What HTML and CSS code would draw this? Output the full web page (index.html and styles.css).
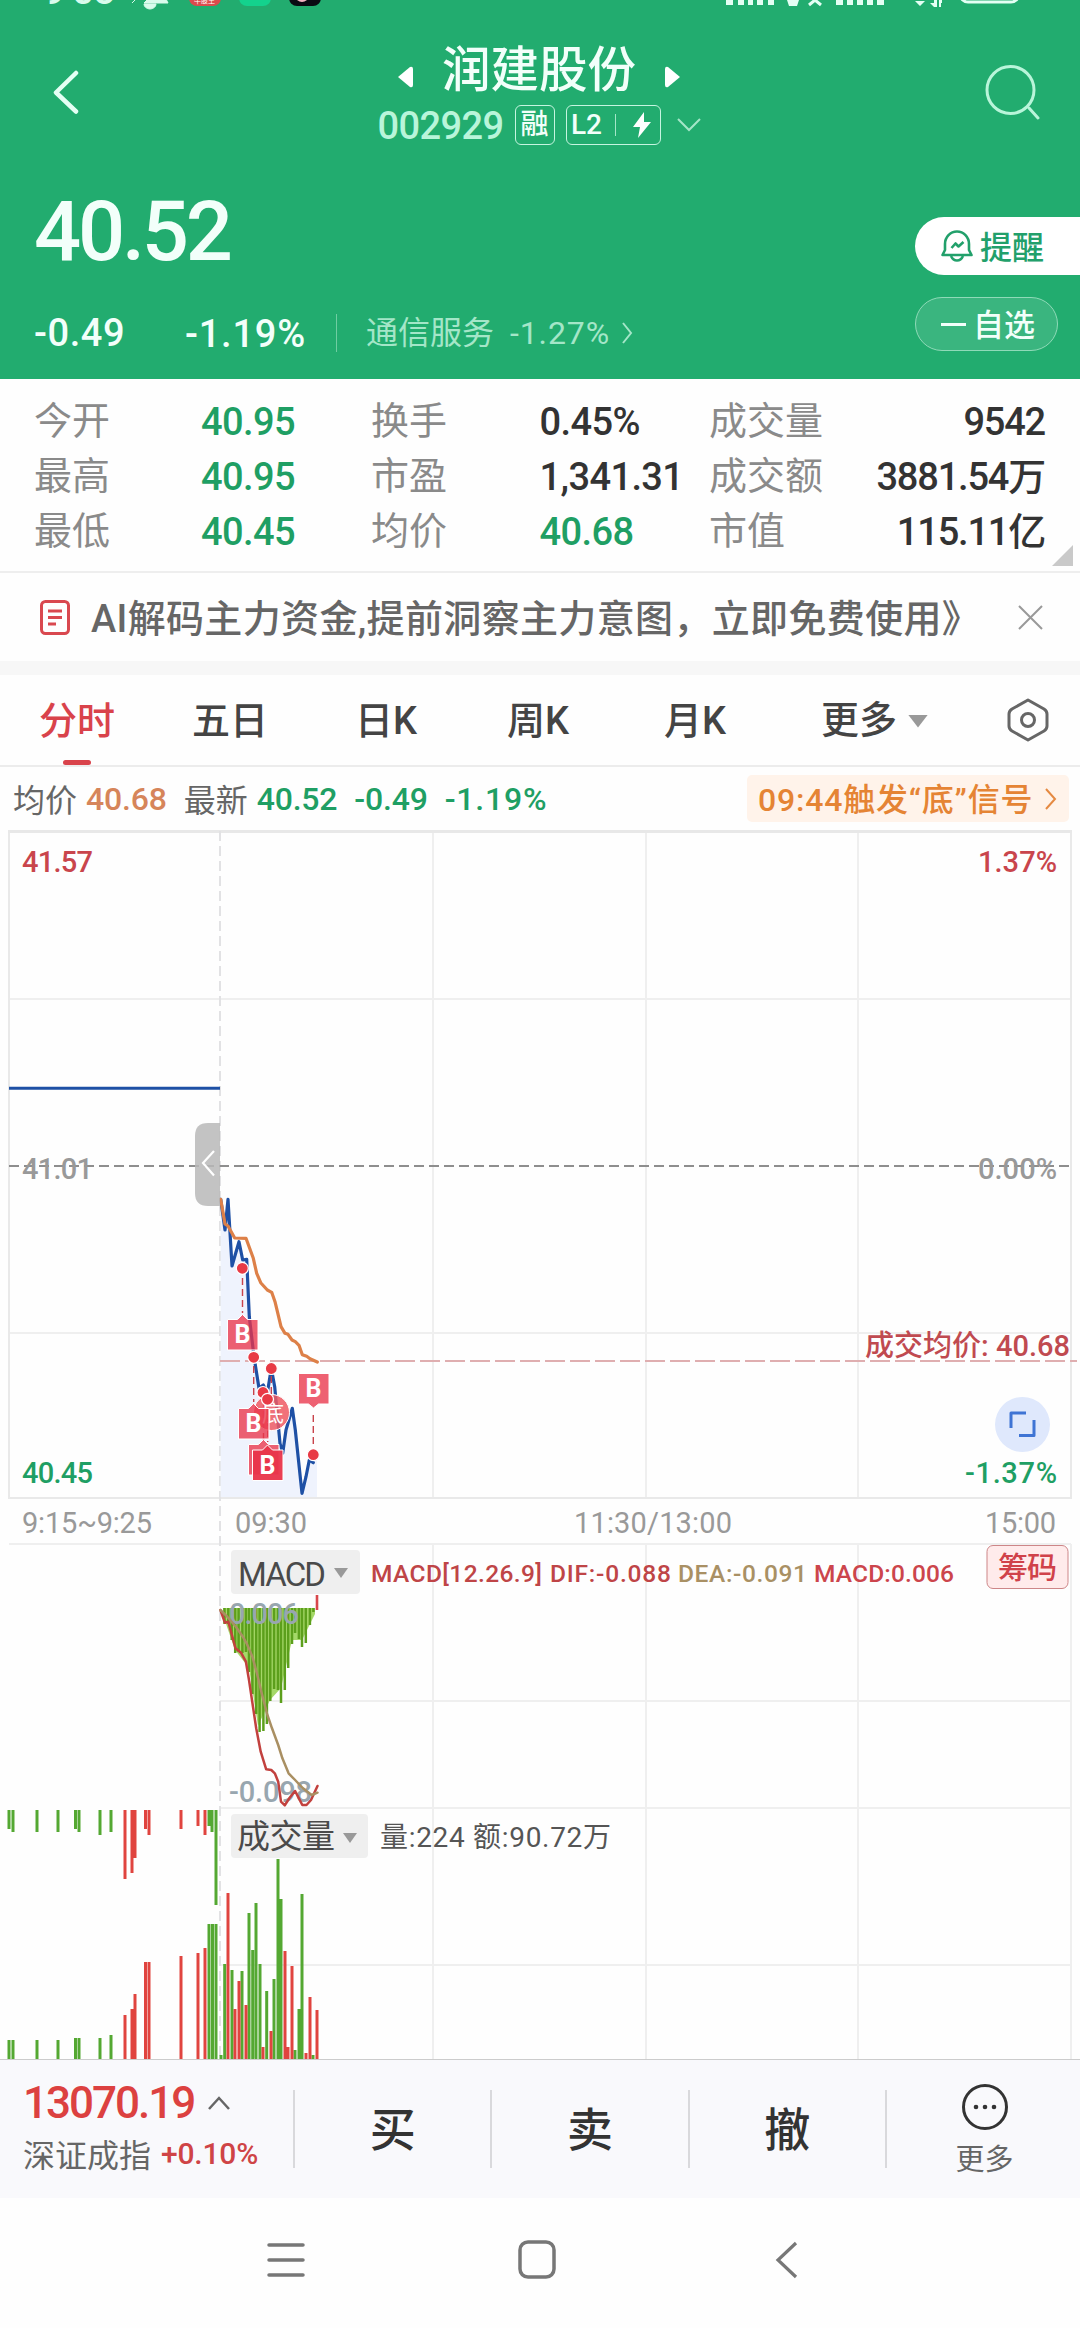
FILE: index.html
```html
<!DOCTYPE html>
<html lang="zh-CN">
<head>
  <meta charset="UTF-8" />
  <meta name="viewport" content="width=device-width, initial-scale=1.0" />
  <title>润建股份 002929</title>
  <link rel="stylesheet" href="styles.css">
</head>
<body>
  <header class="header">
    <svg class="status-bar" width="1080" height="12" viewBox="0 0 1080 12">
      <text class="clock" x="44" y="4">9<tspan dy="-9">:</tspan><tspan x="72" dy="9">58</tspan></text>
      <path d="M132 3l4-4M144 3l4-4h18l2 4zM144 4a6 5 0 0 0 12 0z" fill="#d9fbec" stroke="#d9fbec" stroke-width="1" />
      <rect x="189" y="-26" width="32" height="32" rx="8" fill="#dc4a4c" />
      <text class="app-label" x="194" y="3">牛股王</text>
      <rect x="239" y="-26" width="32" height="32" rx="8" fill="#14d28d" />
      <rect x="289" y="-26" width="32" height="32" rx="8" fill="#0a0a12" />
      <path d="M297 0q5 4 10 0z" fill="#f4b3c2" />
      <path d="M726 0h7v5h-7zM738 0h6v5h-6zM748 0h5v5h-5zM757 0h6v5h-6zM768 0h6v5h-6zM787 0h12l-2 6h-8zM836 0h7v5h-7zM847 0h6v5h-6zM857 0h6v5h-6zM867 0h6v5h-6zM877 0h7v5h-7zM915 1h10l-5 5zM930 3h4V0h3v7h-3zM939 0h3v3h-1v4h-2z" fill="#e4fff4" />
      <path d="M809 5l6-5 6 5" fill="none" stroke="#e4fff4" stroke-width="3" />
      <rect x="960" y="-24" width="59" height="26" rx="8" fill="none" stroke="#e4fff4" stroke-width="3" />
    </svg>
    <div class="title-row">
      <svg class="back" width="30" height="44" viewBox="0 0 30 44"><path d="M25 3L5 22.500l20 19" fill="none" stroke="#e4fff4" stroke-width="4.500" stroke-linecap="round" stroke-linejoin="round" /></svg>
      <div class="title">
        <div class="name">
          <svg width="16" height="22" viewBox="0 0 16 22"><path d="M1 11L13 1q3-1 3 2v16q0 3-3 2z" fill="#fff" /></svg>
          <h1>润建股份</h1>
          <svg width="16" height="22" viewBox="0 0 16 22"><path d="M15 11L3 1Q0 0 0 3v16q0 3 3 2z" fill="#fff" /></svg>
        </div>
        <div class="code">
          <span class="code-number">002929</span>
          <span class="tag">融</span>
          <span class="tag tag-l2">L2<i></i><svg width="18" height="26" viewBox="0 0 18 26"><path d="M11 0L0 15h7L5 26 18 10h-7z" fill="#fff" /></svg></span>
          <svg class="chevron-down" width="24" height="14" viewBox="0 0 24 14"><path d="M1 1l11 11L23 1" fill="none" stroke="#a4e6c8" stroke-width="2" /></svg>
        </div>
      </div>
      <svg class="search" width="56" height="58" viewBox="0 0 56 58"><circle cx="26.500" cy="26" r="23.500" fill="none" stroke="#b9f5da" stroke-width="3" /><path d="M45 44l9 10" stroke="#b9f5da" stroke-width="3" stroke-linecap="round" /></svg>
    </div>
    <div class="quote">
      <div class="quote-left">
        <div class="price">40.52</div>
        <div class="change">
          <span class="change-value">-0.49</span>
          <span class="change-percent">-1.19%</span>
          <span class="sector">通信服务 <b>-1.27%</b></span>
          <svg width="12" height="22" viewBox="0 0 12 22"><path d="M2 1l8 10-8 10" fill="none" stroke="#a4e6c8" stroke-width="2" /></svg>
        </div>
      </div>
      <div class="quote-buttons">
        <div class="alert-button">
          <svg width="32" height="32" viewBox="0 0 32 32" fill="none" stroke="#22a06b" stroke-width="2.600" stroke-linejoin="round"><path d="M4 20V14a12 12.500 0 0 1 24 0v6l2.500 5h-29z" /><path d="M10 26q2 4.500 6 4.500t6-4.500" /><path d="M10.500 18l4-4.500 3 3 5-4.500" /></svg>
          <span>提醒</span>
        </div>
        <div class="watch-button"><i></i><span>自选</span></div>
      </div>
    </div>
  </header>

  <section class="stats">
    <span>今开</span><b class="green">40.95</b><span>换手</span><b>0.45%</b><span>成交量</span><b class="right">9542</b>
    <span>最高</span><b class="green">40.95</b><span>市盈</span><b>1,341.31</b><span>成交额</span><b class="right">3881.54万</b>
    <span>最低</span><b class="green">40.45</b><span>均价</span><b class="green">40.68</b><span>市值</span><b class="right">115.11亿</b>
    <div class="corner"></div>
  </section>

  <section class="notice">
    <svg width="30" height="35" viewBox="0 0 30 35" fill="none" stroke="#d9484f" stroke-width="3"><rect x="1.500" y="1.500" width="27" height="32" rx="4" /><path d="M8 11h14M8 17.500h14M8 24h8" /></svg>
    <p>AI解码主力资金,提前洞察主力意图，立即免费使用》</p>
    <svg width="25" height="25" viewBox="0 0 25 25"><path d="M1 1l23 23M24 1L1 24" stroke="#999" stroke-width="2" /></svg>
  </section>

  <nav class="tabs">
    <span class="active">分时</span>
    <span>五日</span>
    <span>日K</span>
    <span>周K</span>
    <span>月K</span>
    <span class="more">更多<i></i></span>
    <svg width="42" height="44" viewBox="0 0 42 44" fill="none" stroke="#666" stroke-width="3"><path d="M21 2l16 9q3 2 3 5v12q0 3-3 5l-16 9-16-9q-3-2-3-5V16q0-3 3-5z" stroke-linejoin="round" /><circle cx="21" cy="22" r="6.500" /></svg>
  </nav>

  <section class="info">
    <span>均价</span><b class="orange">40.68</b>
    <span class="latest">最新</span><b class="green">40.52</b><b class="green gap">-0.49</b><b class="green gap percent">-1.19%</b>
    <div class="signal"><span>09:44触发“底”信号</span><svg width="12" height="22" viewBox="0 0 12 22"><path d="M1 1l9 10-9 10" fill="none" stroke="#e58a42" stroke-width="2" /></svg></div>
  </section>

  <svg class="chart" width="1080" height="1229" viewBox="0 830 1080 1229">
    <!-- grid -->
    <g fill="none" stroke="#efefef" stroke-width="2">
      <path d="M9 999H1071M9 1333H1071M9 1544H1071M220 1701H1071M220 1808H1071M220 1965H1071" />
      <path d="M433 831V1498M646 831V1498M858 831V1498M433 1544V2059M646 1544V2059M858 1544V2059M1071 1544V2059" />
      <path d="M9 831V1498H1071V831" stroke="#e9e9e9" />
      <path d="M8 831.500H1072" stroke="#e8e8e8" stroke-width="3" />
      <path d="M220 831V2059" stroke="#e2e2e4" stroke-dasharray="10 5" />
    </g>

    <!-- price -->
    <path d="M220.700 1199L225 1230 228 1226 232 1266 239 1241.700 242.700 1260 246.700 1259.300 249.300 1316.700 254 1356.700 259 1388.300 263.300 1385 267.300 1393.300 271.300 1368.300 274.700 1386.700 280 1443.300 282.700 1453.300 286 1430 292.300 1408.300 295.300 1430 302 1493.300 306 1476.700 309.300 1460 317 1460V1497H220.700z" fill="#eff3fd" />
    <path d="M9 1088.300H220" stroke="#1e50a5" stroke-width="3" />
    <path d="M9 1166H1071" stroke="#8e8e8e" stroke-width="2" stroke-dasharray="10 5" />
    <path d="M220 1361H1077" stroke="#dfaeb0" stroke-width="2" stroke-dasharray="20 5" />
    <path d="M220.700 1199.300L225 1230 228 1199.300 232 1266 239 1241.700 242.700 1260 246.700 1259.300 249.300 1316.700 254 1356.700 259 1388.300 263.300 1385 267.300 1393.300 271.300 1368.300 274.700 1386.700 280 1443.300 282.700 1453.300 286 1430 292.300 1408.300 295.300 1430 302 1493.300 306 1476.700 309.300 1460 313.300 1462.700" class="line" stroke="#1e50a5" />
    <path d="M220.700 1199.300L225 1224 228 1226 234.700 1238 246 1238.300 253.300 1258.300 256.700 1273.300 260.700 1282.700 267.300 1290 271.700 1292.300 275 1301.700 281 1326.700 285 1333.300 288 1334.300 292 1340 295.300 1341.700 299 1345.300 302.300 1354.700 306.700 1356.300 310 1358.700 317.300 1362" class="line" stroke="#dd8048" />

    <path d="M220 1123h-12q-13 0-13 13v57q0 13 13 13h12z" fill="#b9b9b9" fill-opacity=".85" />
    <path d="M214 1151l-11 12 11 12.500" fill="none" stroke="#fff" stroke-width="2.200" />

    <!-- trade markers -->
    <path d="M242.500 1278V1313M253.700 1366V1402M271.300 1376V1396M263.500 1400V1440M267.700 1408V1442M313.300 1415V1448" stroke="#c8434b" stroke-width="1.400" stroke-dasharray="7 4" />
    <circle cx="271.500" cy="1412.500" r="18" fill="#ee5963" fill-opacity=".85" stroke="#fff" />
    <text x="262" y="1421" font-size="22" fill="#fff">底</text>
    <g fill="#e9344a" fill-opacity=".78" stroke="#fff" stroke-width="1">
      <path d="M227.500 1319.500h10l5-5 5 5h10.500v30.500h-30.500z" />
      <path d="M238.500 1408.500h10l5-5 5 5h10.500v30.500h-30.500z" />
      <path d="M248.500 1444.500h10l5-5 5 5h10.500v30.500h-30.500z" />
      <path d="M252.500 1450h10l5-5 5 5h10.500v30.500h-30.500z" fill-opacity=".95" />
      <path d="M298.500 1373.500h30.500v30.500h-10.500l-5 4-5-4h-10z" />
    </g>
    <g class="marker-text">
      <text x="242.500" y="1343">B</text>
      <text x="253.500" y="1432">B</text>
      <text x="267.500" y="1474">B</text>
      <text x="313.500" y="1397">B</text>
    </g>
    <g fill="#e83a45" stroke="#fff" stroke-width="1.200">
      <circle cx="242.300" cy="1268.300" r="6" />
      <circle cx="253.700" cy="1357.300" r="6" />
      <circle cx="271.300" cy="1368.500" r="6" />
      <circle cx="263" cy="1392.500" r="6" />
      <circle cx="267.500" cy="1399.300" r="6" />
      <circle cx="313.300" cy="1454.700" r="6" />
    </g>

    <g class="label">
      <text x="22" y="872" textLength="71" fill="#c9454c">41.57</text>
      <text x="978" y="872" textLength="79" fill="#c9454c">1.37%</text>
      <text x="22" y="1179" textLength="71" fill="#999">41.01</text>
      <text x="978" y="1179" textLength="79" fill="#999">0.00%</text>
      <text x="22" y="1483" textLength="71" fill="#1f9f64">40.45</text>
      <text x="965" y="1483" textLength="92" fill="#1f9f64">-1.37%</text>
      <text x="865" y="1356" textLength="205" fill="#c04a50">成交均价: 40.68</text>
    </g>
    <g class="label time">
      <text x="22" y="1533" textLength="130">9:15~9:25</text>
      <text x="235" y="1533" textLength="72">09:30</text>
      <text x="574" y="1533" textLength="158">11:30/13:00</text>
      <text x="985" y="1533" textLength="71">15:00</text>
    </g>
    <circle cx="1022.500" cy="1424.500" r="27.500" fill="#dfe8fc" />
    <path d="M1011 1428V1413H1026M1019 1435.500H1034V1420" fill="none" stroke="#3f74d4" stroke-width="3" stroke-linejoin="round" />

    <!-- MACD -->
    <path class="macd-back" d="M223 1608H315V1614L302 1640 292 1640 281 1688 270 1700 258 1726 249 1668 235 1650 224 1618z" />
    <path class="macd-bars" d="M224.500 1608v16M228.300 1608v16M231.700 1608v32M235.200 1608v45M238.600 1608v44M242.400 1608v45M245.900 1608v44M249 1608v64M252.400 1608v86M256.200 1608v106M259.600 1608v124M263.400 1608v123M266.900 1608v116M270.300 1608v93M274.100 1608v81M277.900 1608v82M281 1608v95M284.800 1608v82M288.200 1608v60M292 1608v36M295.100 1608v25M298.900 1608v31M302 1608v39M305.800 1608v35M309.900 1608v17M313.400 1608v4" />
    <path d="M317 1595V1610" stroke="#d8474b" stroke-width="2.600" />
    <g class="label" fill="#98a6af">
      <text x="229" y="1624" textLength="70">0.006</text>
      <text x="229" y="1802" textLength="83">-0.098</text>
    </g>
    <path d="M220.400 1610L224.900 1622.700 228.300 1621.700 235.500 1648.300 241 1652.700 245.900 1661.700 249 1680 256.200 1728.300 260.700 1751.700 266.200 1769.300 271.300 1770 274.800 1773.300 278.200 1781.700 281 1801.700 284.800 1805.300 289.300 1798.300 295.100 1791 298.900 1798.300 302.300 1805 306.500 1805 311 1800 317.500 1786" class="line thin" stroke="#c2413e" />
    <path d="M220.400 1610L227.300 1616.700 235.900 1626.700 242.800 1636.700 246.600 1643.300 252.400 1656.700 256.900 1673.300 261.700 1693.300 266.900 1713.300 272 1728.300 278.200 1745 282.400 1758.300 288.600 1773.300 295.100 1780 303 1788.300 311.600 1795 317.500 1792.700" class="line thin" stroke="#a98f62" />
    <rect x="231" y="1550" width="129" height="44" rx="4" fill="#efefef" />
    <text x="238" y="1586" font-size="33" textLength="88" fill="#4a4a4a">MACD</text>
    <path d="M334 1568h14l-7 10z" fill="#999" />
    <g class="legend">
      <text x="371" y="1582" textLength="171" fill="#bf4547">MACD[12.26.9]</text>
      <text x="550" y="1582" textLength="121" fill="#bf4547">DIF:-0.088</text>
      <text x="678" y="1582" textLength="129" fill="#a99064">DEA:-0.091</text>
      <text x="814" y="1582" textLength="140" fill="#cc454c">MACD:0.006</text>
    </g>
    <rect x="987" y="1545.500" width="81" height="43" rx="6" fill="#ffebeb" stroke="#cd8688" />
    <text x="998" y="1578" font-size="30" font-weight="500" textLength="59" fill="#d0424a">筹码</text>

    <!-- call auction and volume -->
    <g class="volume" stroke="#54a832">
      <path d="M9 1810V1829M13 1810V1832M37 1810V1832M58 1810V1832M75.500 1810V1829M79 1810V1832M100 1810V1835M111 1810V1832M209 1810V1826M212 1810V1832M216 1810V1905" />
      <path d="M9 2040V2059M13 2040V2059M37 2040V2059M58 2040V2059M75.500 2038V2059M79 2038V2059M100 2038V2059M111 2035V2059M209 1924V2059M212.500 1924V2059M216 1924V2059" />
      <path d="M221 2055V2059M224.700 1964V2059M232 1970V2059M242 1971V2059M249 1913V2059M252.700 1950V2059M256 1903V2059M260 1964V2059M266.700 1991V2059M274 1979V2059M278 1859V2059M281 1899V2059M295 2050V2059M299 2009V2059M302 1894V2059M313 2055V2059" />
    </g>
    <g class="volume" stroke="#e0443f">
      <path d="M125 1810V1879M132 1810V1873M135 1810V1858M145.500 1810V1829M149 1810V1835M181 1810V1829M198 1810V1826M205 1810V1835" />
      <path d="M125 2015V2059M132 2009V2059M135 1994V2059M145.500 1962V2059M149 1962V2059M181 1956V2059M198 1953V2059M205 1948V2059" />
      <path d="M228 1893V2059M235 2009V2059M239 1981V2059M246 2005V2059M263 2047V2059M271 2031V2059M285 1951V2059M288 2047V2059M292 1966V2059M306 2053V2059M310 1997V2059M317 2010V2059" />
    </g>
    <rect x="231" y="1814" width="137" height="44" rx="4" fill="#efefef" />
    <text x="237" y="1848" font-size="33" textLength="98" fill="#4a4a4a">成交量</text>
    <path d="M343 1833h14l-7 10z" fill="#999" />
    <text x="380" y="1847" font-size="28" textLength="231" fill="#555">量:224 额:90.72万</text>
  </svg>

  <footer class="trade-bar">
    <div class="index">
      <div class="index-value">13070.19<svg width="22" height="14" viewBox="0 0 22 14"><path d="M1 13L11 2l10 11" fill="none" stroke="#666" stroke-width="2.500" /></svg></div>
      <div class="index-name">深证成指<b>+0.10%</b></div>
    </div>
    <div class="action">买</div>
    <div class="action">卖</div>
    <div class="action">撤</div>
    <div class="action more-action">
      <svg width="46" height="46" viewBox="0 0 46 46"><circle cx="23" cy="23" r="21.500" fill="none" stroke="#333" stroke-width="3" /><g fill="#333"><circle cx="14" cy="23" r="2.300" /><circle cx="23" cy="23" r="2.300" /><circle cx="32" cy="23" r="2.300" /></g></svg>
      <span>更多</span>
    </div>
  </footer>

  <div class="system-nav">
    <svg width="38" height="40" viewBox="0 0 38 40"><path d="M2 5h34M2 20h34M2 35h34" stroke="#777" stroke-width="3.500" stroke-linecap="round" /></svg>
    <svg width="38" height="40" viewBox="0 0 38 40"><rect x="2" y="2" width="34" height="35" rx="8" fill="none" stroke="#777" stroke-width="3.500" /></svg>
    <svg width="38" height="40" viewBox="0 0 38 40"><path d="M28 3L10 20l18 17" fill="none" stroke="#777" stroke-width="3.200" /></svg>
  </div>
</body>
</html>
```
FILE: styles.css
```css
* {
  box-sizing: border-box;
}
body {
  margin: 0;
  width: 1080px;
  background: #fefefe;
  color: #333;
  font-family: Roboto, "Noto Sans CJK SC", sans-serif;
}
svg {
  display: block;
  flex: none;
}
h1, p {
  margin: 0;
}
b {
  font-weight: 500;
}
i {
  display: block;
}
.green {
  color: #1f9f64;
}
.orange {
  color: #d6855a;
}

/* header */
.header {
  height: 379px;
  background: #22ac6f;
  color: #f2fffa;
}
.clock {
  font-size: 38px;
  font-weight: 500;
  fill: #d9fbec;
}
.app-label {
  font-size: 7px;
  fill: #fff;
}
.title-row {
  display: flex;
  justify-content: space-between;
  height: 138px;
  padding: 0 40px 0 51px;
}
.back {
  margin-top: 58px;
}
.search {
  margin-top: 52px;
}
.title {
  padding-top: 31px;
  margin-left: 13px;
}
.name {
  display: flex;
  align-items: center;
  justify-content: center;
  gap: 29px;
  height: 56px;
}
.name svg {
  margin-top: 12px;
}
.name h1 {
  font-size: 48.5px;
  font-weight: 500;
  line-height: 56px;
}
.code {
  display: flex;
  align-items: center;
  height: 40px;
  margin-top: 6px;
}
.code-number {
  width: 137px;
  padding-top: 2px;
  font-size: 38px;
  font-weight: 500;
  letter-spacing: -0.6px;
  color: #b9f5da;
}
.tag {
  display: flex;
  align-items: center;
  justify-content: center;
  width: 40px;
  height: 40px;
  border: 1.5px solid #c5f5e0;
  border-radius: 6px;
  font-size: 28px;
  font-weight: 500;
  line-height: 36px;
}
.tag-l2 {
  width: 95px;
  margin-left: 11px;
  padding-right: 4px;
}
.tag-l2 i {
  width: 1px;
  height: 22px;
  margin: 0 17px 0 13px;
  background: #a4e6c8;
}
.chevron-down {
  margin-left: 16px;
}
.quote {
  display: flex;
  justify-content: space-between;
  padding-left: 34px;
}
.price {
  height: 96px;
  margin-top: 34px;
  font-size: 83px;
  font-weight: 500;
  line-height: 96px;
  letter-spacing: -3.2px;
}
.change {
  display: flex;
  align-items: center;
  height: 40px;
  margin-top: 33px;
  font-size: 38px;
  font-weight: 500;
}
.change-value {
  width: 151px;
  letter-spacing: 0.6px;
}
.change-percent {
  width: 152px;
  height: 38px;
  line-height: 40px;
  letter-spacing: 0.8px;
  border-right: 1px solid #6fcda2;
}
.sector {
  width: 255px;
  margin-left: 29px;
  font-size: 32px;
  font-weight: 400;
  line-height: 40px;
  white-space: nowrap;
  color: #a4e6c8;
}
.sector b {
  margin-left: 8px;
  font-weight: 400;
  letter-spacing: 0.9px;
}
.quote-buttons {
  width: 165px;
  padding-top: 67px;
}
.alert-button {
  display: flex;
  align-items: center;
  gap: 7px;
  height: 58px;
  padding-left: 26px;
  border-radius: 29px 0 0 29px;
  background: #fff;
  color: #22a06b;
  font-size: 32px;
  font-weight: 500;
}
.quote-buttons span {
  padding-bottom: 3px;
}
.watch-button {
  display: flex;
  align-items: center;
  gap: 7px;
  width: 143px;
  height: 54px;
  margin-top: 22px;
  padding-left: 25px;
  border: 1px solid #8fdab8;
  border-radius: 27px;
  background: #3ab57f;
  font-size: 31px;
  font-weight: 500;
}
.watch-button i {
  width: 25px;
  height: 3px;
  background: #f2fffa;
}

/* key figures */
.stats {
  position: relative;
  display: grid;
  grid-template-columns: 167px 170px 168.500px 169.500px 140px 196px;
  grid-auto-rows: 55px;
  height: 194px;
  padding: 15px 34px 0;
  border-bottom: 2px solid #eee;
  font-size: 38px;
  line-height: 55px;
  white-space: nowrap;
}
.stats span {
  color: #8a8a8a;
}
.stats b {
  padding-top: 1px;
  letter-spacing: -0.6px;
}
.stats .right {
  letter-spacing: -1.2px;
  text-align: right;
}
.corner {
  position: absolute;
  right: 7px;
  bottom: 5px;
  width: 21px;
  height: 21px;
  background: #c9c9c9;
  clip-path: polygon(100% 0, 100% 100%, 0 100%);
}

.notice {
  display: flex;
  align-items: center;
  height: 102px;
  padding: 0 37px 0 40px;
  border-bottom: 14px solid #f7f7f7;
}
.notice p {
  flex: 1;
  margin-left: 21px;
  padding-bottom: 4px;
  font-size: 38px;
  font-weight: 500;
  letter-spacing: 0.35px;
  white-space: nowrap;
  color: #666;
}

/* chart tabs */
.tabs {
  display: grid;
  grid-template-columns: 153px 163px 152px 157px 157px 186px 42px;
  align-items: center;
  height: 92px;
  padding-left: 39px;
  border-bottom: 2px solid #ececec;
  font-size: 38px;
  font-weight: 500;
  line-height: 90px;
  color: #444;
}
.tabs span {
  height: 90px;
  line-height: 93px;
}
.tabs .active {
  position: relative;
  color: #d9434b;
}
.active::after {
  content: "";
  position: absolute;
  left: 24px;
  bottom: 0;
  width: 28px;
  height: 5px;
  border-radius: 3px;
  background: #d9434b;
}
.more {
  display: flex;
  align-items: center;
  gap: 11px;
}
.more i {
  width: 20px;
  height: 13px;
  margin-top: 2px;
  background: #999;
  clip-path: polygon(0 0, 100% 0, 50% 100%);
}

.info {
  display: flex;
  align-items: center;
  height: 63px;
  padding: 0 11px 0 13px;
  font-size: 32px;
  color: #666;
}
.info > span {
  padding-bottom: 2px;
}
.info b {
  margin-left: 9px;
  letter-spacing: -0.2px;
}
.info .latest {
  margin-left: 17px;
}
.info .gap {
  margin-left: 17px;
}
.info .percent {
  letter-spacing: 0.8px;
}
.signal {
  display: flex;
  align-items: center;
  justify-content: space-between;
  width: 322px;
  height: 47px;
  margin-left: auto;
  padding: 0 12px 0 11px;
  border-radius: 5px;
  background: #fff3ea;
  color: #e58434;
  font-size: 32px;
  font-weight: 500;
  letter-spacing: 0.8px;
  white-space: nowrap;
}
.signal span {
  padding-bottom: 3px;
}

/* chart */
.line {
  fill: none;
  stroke-width: 3.2;
  stroke-linejoin: round;
  stroke-linecap: round;
}
.thin {
  stroke-width: 2.5;
}
.label {
  font-size: 29px;
  font-weight: 500;
}
.time {
  fill: #999;
  font-weight: 400;
}
.legend {
  font-size: 24.5px;
  font-weight: 500;
}
.marker-text {
  font-size: 25px;
  font-weight: 700;
  fill: #fff;
  text-anchor: middle;
}
.macd-back {
  fill: #a5d868;
}
.macd-bars {
  stroke: #5c9f1c;
  stroke-width: 2.5;
}
.volume {
  stroke-width: 3;
}

/* bottom */
.trade-bar {
  display: flex;
  height: 139px;
  padding-top: 30px;
  border-top: 1.5px solid #ccc;
  background: #f9f9fc;
}
.index {
  flex: none;
  width: 293px;
  margin-top: -13px;
  padding-left: 23px;
}
.index-value {
  display: flex;
  align-items: center;
  gap: 14px;
  height: 52px;
  font-size: 44px;
  font-weight: 500;
  letter-spacing: -2px;
  color: #dc4140;
}
.index-name {
  display: flex;
  align-items: center;
  height: 48px;
  font-size: 32px;
  white-space: nowrap;
  color: #666;
}
.index-name b {
  margin-left: 10px;
  font-size: 30px;
  letter-spacing: -0.2px;
  color: #cf4446;
}
.action {
  flex: none;
  width: 197.3px;
  height: 78px;
  border-left: 2px solid #d9d9dc;
  font-size: 46px;
  font-weight: 500;
  line-height: 81px;
  text-align: center;
}
.more-action {
  display: flex;
  flex-direction: column;
  align-items: center;
}
.more-action svg {
  margin-top: -6px;
}
.more-action span {
  margin-top: 10px;
  font-size: 29px;
  font-weight: 400;
  line-height: 40px;
  color: #666;
}
.system-nav {
  display: flex;
  justify-content: space-between;
  height: 130px;
  padding: 42px 274px 0 267px;
}
```
